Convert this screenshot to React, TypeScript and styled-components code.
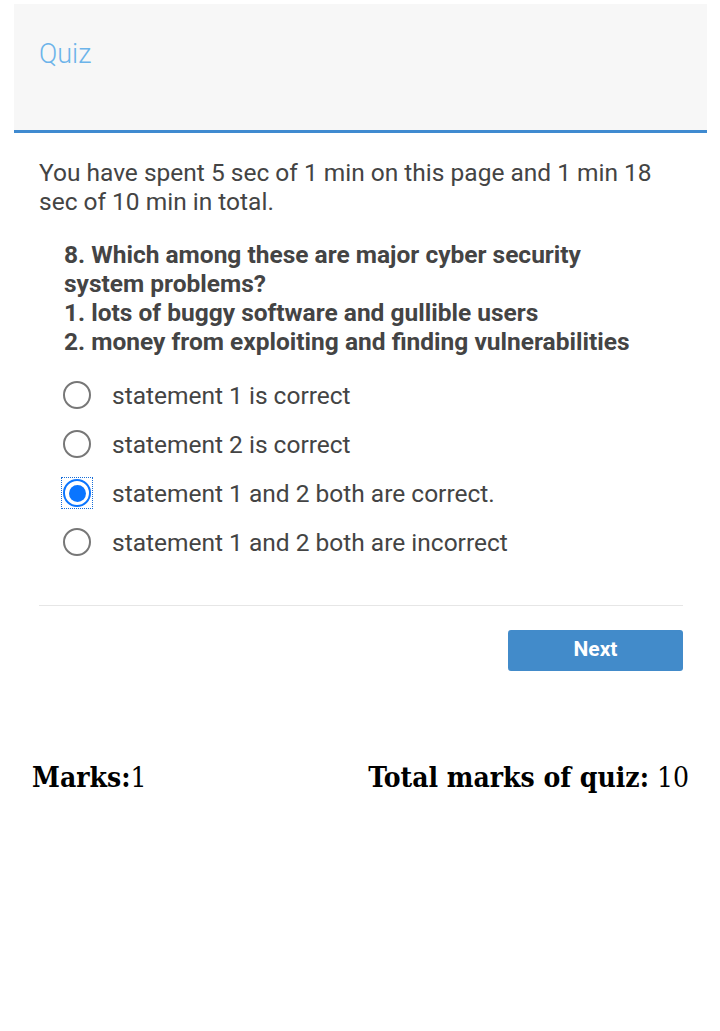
import React from "react";
import styled, { createGlobalStyle } from "styled-components";

const Global = createGlobalStyle`
  html, body { margin: 0; padding: 0; background: #fff; }
  body { font-family: Roboto, "Liberation Sans", sans-serif; }
`;

const Page = styled.div`
  padding: 4px 13px 0 14px;
`;

const Header = styled.div`
  background: #f7f7f7;
  border-bottom: 3px solid #3f8ad0;
  height: 129px;
  padding: 0 25px;
  box-sizing: border-box;
  display: flex;
  align-items: flex-start;
`;

const Title = styled.h1`
  margin: 34px 0 0;
  font-family: Roboto, sans-serif;
  font-weight: 300;
  font-size: 27px;
  line-height: 32px;
  color: #6cb4ea;
`;

const Body = styled.div`
  padding: 25px 24px 0 25px;
  color: #444;
`;

const Timer = styled.p`
  margin: 0;
  font-size: 24.5px;
  line-height: 29px;
`;

const Question = styled.div`
  margin: 24px 0 0 25px;
  font-size: 24.5px;
  line-height: 29px;
  font-weight: 700;
  color: #444;
`;

const Options = styled.div`
  margin: 25px 0 0 24px;
  display: flex;
  flex-direction: column;
  gap: 21px;
`;

const Option = styled.label`
  display: flex;
  align-items: center;
  gap: 21px;
  height: 28px;
  font-size: 24.5px;
  color: #444;
`;

const RadioWrap = styled.span<{ $focus?: boolean }>`
  position: relative;
  width: 28px;
  height: 28px;
  flex: none;
  outline: ${(p) => (p.$focus ? "1px dotted #1a6fd8" : "none")};
  outline-offset: 1px;
`;

const Circle = styled.span<{ $checked?: boolean }>`
  width: 28px;
  height: 28px;
  box-sizing: border-box;
  border-radius: 50%;
  border: 2px solid ${(p) => (p.$checked ? "#0a75ff" : "#777")};
  background: #fff;
  display: flex;
  align-items: center;
  justify-content: center;
`;

const Dot = styled.span`
  width: 17px;
  height: 17px;
  border-radius: 50%;
  background: #0a75ff;
`;

const Rule = styled.hr`
  margin: 49px 0 0;
  border: none;
  border-top: 1px solid #e6e6e6;
`;

const Actions = styled.div`
  display: flex;
  justify-content: flex-end;
  margin-top: 24px;
`;

const NextButton = styled.button`
  width: 175px;
  height: 41px;
  border: none;
  border-radius: 3px;
  background: #428bca;
  color: #fff;
  font-family: Roboto, sans-serif;
  font-weight: 700;
  font-size: 21px;
  padding: 0 0 3px;
`;

const Footer = styled.div`
  display: flex;
  justify-content: space-between;
  align-items: baseline;
  margin: 90px 31px 0 32px;
  font-family: "DejaVu Serif", "Liberation Serif", serif;
  font-stretch: condensed;
  font-size: 28px;
  color: #000;
`;

const Strong = styled.b`
  font-weight: 700;
`;

const options = [
  "statement 1 is correct",
  "statement 2 is correct",
  "statement 1 and 2 both are correct.",
  "statement 1 and 2 both are incorrect",
];

export default function App() {
  const selected = 2;
  return (
    <>
      <Global />
      <Page>
        <Header>
          <Title>Quiz</Title>
        </Header>
        <Body>
          <Timer>
            You have spent 5 sec of 1 min on this page and 1 min 18 sec of 10 min in total.
          </Timer>
          <Question>
            8. Which among these are major cyber security
            <br />
            system problems?
            <br />
            1. lots of buggy software and gullible users
            <br />
            2. money from exploiting and finding vulnerabilities
          </Question>
          <Options>
            {options.map((o, i) => (
              <Option key={o}>
                <RadioWrap $focus={i === selected}>
                  <Circle $checked={i === selected}>{i === selected && <Dot />}</Circle>
                </RadioWrap>
                {o}
              </Option>
            ))}
          </Options>
          <Rule />
          <Actions>
            <NextButton>Next</NextButton>
          </Actions>
        </Body>
      </Page>
      <Footer>
        <span>
          <Strong>Marks:</Strong>1
        </span>
        <span>
          <Strong>Total marks of quiz:</Strong> 10
        </span>
      </Footer>
    </>
  );
}
